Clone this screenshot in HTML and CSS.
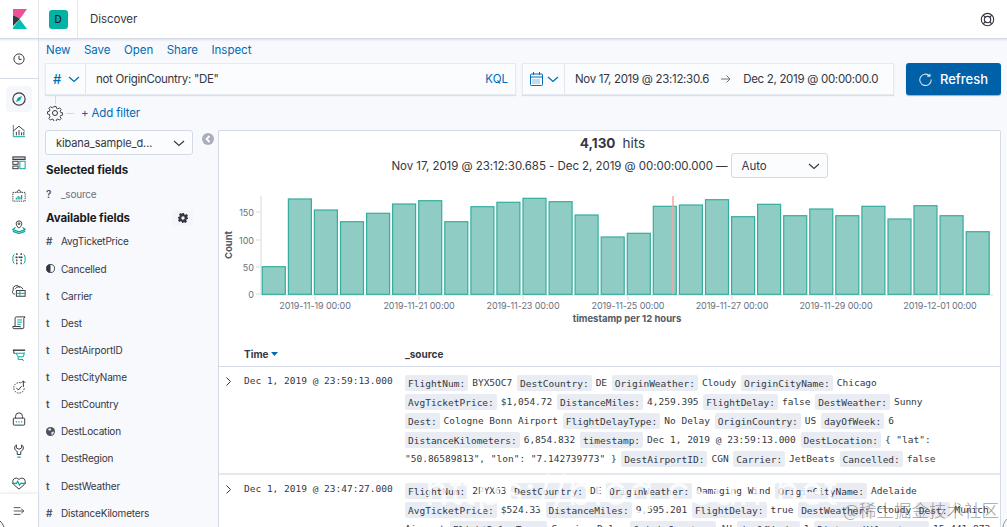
FILE: index.html
```html
<!DOCTYPE html>
<html lang="en">
<head>
<meta charset="utf-8">
<title>Discover - Kibana</title>
<link rel="stylesheet" href="styles.css">
</head>
<body>
<div class="app">
  <header class="topbar">
    <div class="logo-cell">
      <svg class="logo" width="16" height="20" viewBox="0 0 16 20"><path fill="#f04e98" d="M1 0h14L7.700 10.300C5.800 8 3.500 6.800 1 6.500z"/><path fill="#343741" d="M1 6.500C3.500 6.800 5.800 8 7.700 10.300L1 17z"/><path fill="#00bfb3" d="M7.700 10.300 15 20H1v-1.500z"/></svg>
    </div>
    <div class="space-cell"><span class="space-tile">D</span></div>
    <div class="page-title">Discover</div>
    <svg class="help" width="15" height="15" viewBox="0 0 16 16" fill="none" stroke="#343741" stroke-width="1.200"><circle cx="8" cy="8" r="6.600"/><circle cx="8" cy="8" r="3.400"/><path d="M3.400 3.400l2.200 2.200M12.600 3.400l-2.200 2.200M3.400 12.600l2.200-2.200M12.600 12.600l-2.200-2.200"/></svg>
  </header>
  <div class="below">
    <nav class="sidenav">
      <div class="nav-recent">
        <svg width="12" height="12" viewBox="0 0 16 16" fill="none" stroke="#343741" stroke-width="1.300"><circle cx="8" cy="8" r="6.800"/><path d="M8 3.800V8.500h3.400"/></svg>
      </div>
      <div class="nav-list">
        <div class="nav-item active"><svg viewBox="0 0 16 16" fill="none"><circle cx="8" cy="8" r="7" stroke="#343741" stroke-width="1.300"/><path fill="#00a69b" d="M11.500 4.500 9.300 9.300 4.500 11.500 6.700 6.700z"/></svg></div>
        <div class="nav-item"><svg viewBox="0 0 16 16" fill="none" stroke="#343741" stroke-width="1.100"><path stroke="#00a69b" d="M1.500 1v13.500H15"/><path d="M1.500 8 8 2.500 14.500 8M5 13V9M8 13V7M11 13V9.500M13.500 13V9"/></svg></div>
        <div class="nav-item"><svg viewBox="0 0 16 16" fill="none" stroke="#343741" stroke-width="1.100"><rect x="1" y="1" width="14" height="3" fill="#c4c8ce"/><rect x="1" y="6" width="6" height="3.500"/><rect x="1" y="11.500" width="6" height="3"/><rect x="9" y="6" width="6" height="8.500" stroke="#00a69b"/></svg></div>
        <div class="nav-item"><svg viewBox="0 0 16 16" fill="none" stroke="#343741" stroke-width="1.100"><path stroke-dasharray="1.500 1" d="M1 5h14v10H1z"/><path d="M5 5l3-3 3 3"/><path stroke="#00a69b" stroke-width="1.400" d="M5 13v-2M7 13V9M9 13v-3M11 13V8"/></svg></div>
        <div class="nav-item"><svg viewBox="0 0 16 16" fill="none" stroke="#343741" stroke-width="1.100"><path d="M8 9.500S4.800 6.800 4.800 4.200a3.200 3.200 0 0 1 6.400 0C11.200 6.800 8 9.500 8 9.500z"/><circle cx="8" cy="4.200" r="1"/><path stroke="#00a69b" stroke-width="1.300" d="M4 8.500 1 11l7 2.500 7-2.500-3-2.500M1 13l7 2.500L15 13"/></svg></div>
        <div class="nav-item"><svg viewBox="0 0 16 16" fill="none" stroke="#343741" stroke-width="1.100"><path stroke="#00a69b" d="M3 2.500C1.500 3.500 1 5 1 8s.5 4.500 2 5.500M13 2.500c1.500 1 2 2.500 2 5.500s-.5 4.500-2 5.500"/><path stroke-width="1.500" stroke-dasharray="2 1.500" d="M5.500 1.500v13M10.500 1.500v13M4 6h8"/></svg></div>
        <div class="nav-item"><svg viewBox="0 0 16 16" fill="none" stroke="#343741" stroke-width="1.100"><path d="M3.500 11.500H3A2.500 2.500 0 0 1 1.500 7 3.800 3.800 0 0 1 8.700 4.200"/><path d="M3.500 5.500c2-2.500 7-4 9 .5"/><rect x="5" y="7.500" width="10" height="6.500"/><path stroke="#00a69b" d="M5 10.700h10M9 7.500V14"/></svg></div>
        <div class="nav-item"><svg viewBox="0 0 16 16" fill="none" stroke="#343741" stroke-width="1.100"><path d="M3.500 12V2.500A1.500 1.500 0 0 1 5 1h10l-1.500 1.500V12a2 2 0 0 1-2 2.500H2.500A1.500 1.500 0 0 1 1 13v-1h8.500v1"/><path stroke="#00a69b" d="M6 4.500h5.500M6 7h5.500M6 9.500h4"/></svg></div>
        <div class="nav-item"><svg viewBox="0 0 16 16" fill="none" stroke="#343741" stroke-width="1.100"><path stroke-width="1.600" d="M1 2.500h14"/><path d="M2 2.500v3.500h2"/><path stroke="#00a69b" d="M4.500 6h9.500v-1M4.500 6 7 10h6l1-4M7 10v3h5.500"/><path d="M12 13l1 1.500"/></svg></div>
        <div class="nav-item"><svg viewBox="0 0 16 16" fill="none" stroke="#343741" stroke-width="1.100"><path stroke-dasharray="1.800 1.200" d="M10 3.300A6 6 0 1 0 14 9.500"/><path d="M5 9l2.300 2.500L11 7"/><path stroke="#343741" d="M13 8V1M10.800 3.300 13 1l2.200 2.300"/></svg></div>
        <div class="nav-item"><svg viewBox="0 0 16 16" fill="none" stroke="#343741" stroke-width="1.100"><rect x="1.500" y="7" width="13" height="8" rx="1"/><path d="M4 7V5a4 4 0 0 1 8 0v2"/><path stroke="#00a69b" stroke-width="1.400" d="M5 10.500v1.500M8 10.500v1.500M11 10.500v1.500"/></svg></div>
        <div class="nav-item"><svg viewBox="0 0 16 16" fill="none" stroke="#343741" stroke-width="1.100"><path d="M5 1C3.500 2 3 3 3 4.500c0 2 1.500 3.300 3 4V12h4V8.500c1.500-.7 3-2 3-4C13 3 12.500 2 11 1v3.500L8 6 5 4.500z"/><path stroke="#00a69b" stroke-width="1.300" d="M6 15h4"/></svg></div>
        <div class="nav-item"><svg viewBox="0 0 16 16" fill="none" stroke="#343741" stroke-width="1.100"><path d="M2.200 10C.5 8 .5 5 2 3.500S6.500 2 8 4c1.500-2 4.500-2 6 -.5s1.500 4.500-.2 6.500L8 15z"/><path stroke="#00a69b" stroke-width="1.300" d="M0 8.500h5l1.500-2.500 2 4.500 1.500-2h6"/></svg></div>
      </div>
      <div class="nav-collapse">
        <svg width="12" height="12" viewBox="0 0 16 16" fill="none" stroke="#343741" stroke-width="1.100"><path d="M1 3.500h9M1 8h13M1 12.500h9M11 5l3.500 3-3.500 3"/></svg>
      </div>
    </nav>
    <main class="main">
      <div class="menu">
        <a class="menu-link">New</a><a class="menu-link">Save</a><a class="menu-link">Open</a><a class="menu-link">Share</a><a class="menu-link">Inspect</a>
      </div>
      <div class="query-row">
        <div class="query">
          <div class="query-prefix"><span class="hash">#</span>
            <svg class="chev-blue" width="12" height="12" viewBox="0 0 12 12" fill="none" stroke="#006bb4" stroke-width="1.200"><path d="M1 4l5 4.500L11 4"/></svg></div>
          <div class="query-text">not OriginCountry: "DE"</div>
          <div class="kql">KQL</div>
        </div>
        <div class="dates">
          <div class="date-prefix">
            <svg width="13" height="14" viewBox="0 0 13 14" fill="none" stroke="#006bb4" stroke-width="1"><rect x=".5" y="2" width="12" height="11.500" rx="1"/><path d="M.5 5h12M3.500 0v3M9.500 0v3"/><path stroke-dasharray="1 1" stroke-width="5" d="M2.500 9.500h8" opacity=".45"/></svg>
            <svg width="12" height="12" viewBox="0 0 12 12" fill="none" stroke="#006bb4" stroke-width="1.200"><path d="M1 4l5 4.500L11 4"/></svg>
          </div>
          <div class="date-text"><span>Nov 17, 2019 @ 23:12:30.6</span>
            <svg class="arrow" width="10" height="10" viewBox="0 0 10 10" fill="none" stroke="#69707d" stroke-width="1"><path d="M0 5h9M5.500 1.500 9 5 5.500 8.500"/></svg>
            <span>Dec 2, 2019 @ 00:00:00.0</span></div>
        </div>
        <button class="refresh">
          <svg width="13" height="13" viewBox="0 0 16 16" fill="none" stroke="#fff" stroke-width="1.300" opacity=".85"><path d="M13 3.500A7 7 0 1 0 15 8M10 4h3.500V.8"/></svg>
          <span>Refresh</span></button>
      </div>
      <div class="filter-row">
        <i class="filter-stem"></i>
        <svg width="16" height="16" viewBox="0 0 16 16" fill="none" stroke="#343741" stroke-width="1"><path d="M6.800 1h2.400l.4 2 1.400.6 1.800-1.100 1.700 1.700-1.100 1.800.6 1.400 2 .4v2.400l-2 .4-.6 1.400 1.100 1.800-1.700 1.700-1.800-1.100-1.400.6-.4 2H6.800l-.4-2-1.400-.6-1.800 1.100-1.700-1.700 1.100-1.800L2 9.400 0 9V6.600l2-.4.6-1.400-1.100-1.800 1.700-1.700L5 2.400l1.400-.6z" transform="translate(.5 .5) scale(.94)"/><circle cx="8" cy="8" r="2.500"/></svg>
        <i class="filter-dash"></i>
        <a class="add-filter">+ Add filter</a>
      </div>
      <div class="content">
        <aside class="sidebar">
          <div class="index-select"><span>kibana_sample_d...</span>
            <svg width="12" height="12" viewBox="0 0 12 12" fill="none" stroke="#343741" stroke-width="1.100"><path d="M1 4l5 4.500L11 4"/></svg></div>
          <h3 class="side-title first">Selected fields</h3>
          <div class="field selected"><span class="ftype">?</span><span class="fname muted">_source</span></div>
          <div class="avail-head"><h3 class="side-title">Available fields</h3>
            <span class="gear-btn"><svg width="10" height="10" viewBox="0 0 10 10"><path fill="#343741" fill-rule="evenodd" d="M4 0h2l.3 1.400.9.400L8.500 1 10 2.500l-.8 1.300.4.900L10 5v1l-1.400.3-.4.900.8 1.300L7.500 10 6.200 9.200l-.9.400L5 10H4l-.3-1.400-.9-.4-1.300.8L0 7.500l.8-1.300-.4-.9L0 5V4l1.400-.3.400-.9L1 1.500 2.500 0l1.300.8.900-.4zM5 3.300a1.700 1.700 0 1 0 0 3.400 1.700 1.700 0 0 0 0-3.400z"/></svg></span></div>
          <div class="fields">
            <div class="field"><span class="ftype">#</span><span class="fname">AvgTicketPrice</span></div>
            <div class="field"><span class="ftype"><svg width="9" height="9" viewBox="0 0 10 10"><circle cx="5" cy="5" r="4.500" fill="none" stroke="#343741"/><path fill="#343741" d="M5 .5a4.500 4.500 0 0 0 0 9z"/></svg></span><span class="fname">Cancelled</span></div>
            <div class="field"><span class="ftype">t</span><span class="fname">Carrier</span></div>
            <div class="field"><span class="ftype">t</span><span class="fname">Dest</span></div>
            <div class="field"><span class="ftype">t</span><span class="fname">DestAirportID</span></div>
            <div class="field"><span class="ftype">t</span><span class="fname">DestCityName</span></div>
            <div class="field"><span class="ftype">t</span><span class="fname">DestCountry</span></div>
            <div class="field"><span class="ftype"><svg width="9" height="9" viewBox="0 0 10 10"><circle cx="5" cy="5" r="5" fill="#4b505a"/><path fill="#dfe3e8" d="M2 2.500 5 1l1 2-2 1.500zM6 5.500l3-.5-1 3-2 1z"/></svg></span><span class="fname">DestLocation</span></div>
            <div class="field"><span class="ftype">t</span><span class="fname">DestRegion</span></div>
            <div class="field"><span class="ftype">t</span><span class="fname">DestWeather</span></div>
            <div class="field"><span class="ftype">#</span><span class="fname">DistanceKilometers</span></div>
          </div>
        </aside>
        <div class="collapse-col"><svg width="12" height="12" viewBox="0 0 12 12"><circle cx="6" cy="6" r="6" fill="#a8afbb"/><path d="M7.500 3 4.500 6l3 3" fill="none" stroke="#fff" stroke-width="1.800"/></svg></div>
        <section class="panel">
          <div class="hits"><strong>4,130</strong><span>hits</span></div>
          <div class="range"><span>Nov 17, 2019 @ 23:12:30.685 - Dec 2, 2019 @ 00:00:00.000 —</span>
            <div class="interval"><span>Auto</span><svg width="12" height="12" viewBox="0 0 12 12" fill="none" stroke="#343741" stroke-width="1.100"><path d="M1 4l5 4.500L11 4"/></svg></div>
          </div>
          <svg class="chart" width="781" height="150" viewBox="0 0 781 150">
            <g class="axis-line"><path d="M42 11v99M42 110h732"/><path d="M37 27h5M37 55h5M37 82h5M37 109h5M96 110v5M200 110v5M304 110v5M409 110v5M513 110v5M617 110v5M721 110v5"/></g>
            <g class="bars">
              <rect x="43.300" y="81.700" width="23" height="27.600"/><rect x="69.400" y="14" width="23" height="95.300"/><rect x="95.400" y="25" width="23" height="84.300"/><rect x="121.500" y="36.700" width="23" height="72.600"/>
              <rect x="147.600" y="28.300" width="23" height="81"/><rect x="173.600" y="19" width="23" height="90.300"/><rect x="199.700" y="15.700" width="23" height="93.600"/><rect x="225.800" y="36.700" width="23" height="72.600"/>
              <rect x="251.900" y="21.700" width="23" height="87.600"/><rect x="277.900" y="17.300" width="23" height="92"/><rect x="304" y="13.300" width="23" height="96"/><rect x="330.100" y="16.700" width="23" height="92.600"/>
              <rect x="356.100" y="30" width="23" height="79.300"/><rect x="382.200" y="52" width="23" height="57.300"/><rect x="408.300" y="48.300" width="23" height="61"/><rect x="434.300" y="21.300" width="23" height="88"/>
              <rect x="460.400" y="20" width="23" height="89.300"/><rect x="486.500" y="14.700" width="23" height="94.600"/><rect x="512.600" y="31.700" width="23" height="77.600"/><rect x="538.600" y="19.300" width="23" height="90"/>
              <rect x="564.700" y="30.700" width="23" height="78.600"/><rect x="590.800" y="24" width="23" height="85.300"/><rect x="616.800" y="30.700" width="23" height="78.600"/><rect x="642.900" y="21.300" width="23" height="88"/>
              <rect x="669" y="34" width="23" height="75.300"/><rect x="695" y="20.700" width="23" height="88.600"/><rect x="721.100" y="30.700" width="23" height="78.600"/><rect x="747.200" y="46.700" width="23" height="62.600"/>
            </g>
            <path class="now-line" d="M454 11v98"/>
            <g class="ylabels"><text x="35" y="30.500">150</text><text x="35" y="58.500">100</text><text x="35" y="85.500">50</text><text x="35" y="113">0</text></g>
            <g class="xlabels"><text x="96" y="124">2019-11-19 00:00</text><text x="200" y="124">2019-11-21 00:00</text><text x="304" y="124">2019-11-23 00:00</text><text x="409" y="124">2019-11-25 00:00</text><text x="513" y="124">2019-11-27 00:00</text><text x="617" y="124">2019-11-29 00:00</text><text x="721" y="124">2019-12-01 00:00</text></g>
            <text class="axis-title" x="408" y="137">timestamp per 12 hours</text>
            <text class="axis-title" transform="translate(12.500 60) rotate(-90)">Count</text>
          </svg>
          <div class="thead"><span></span><span class="th">Time <svg width="7" height="4" viewBox="0 0 7 4"><path fill="#006bb4" d="M0 0h7L3.500 4z"/></svg></span><span class="th">_source</span></div>
          <div class="row">
            <svg class="row-chev" width="7" height="9" viewBox="0 0 7 9" fill="none" stroke="#343741" stroke-width="1"><path d="M1.500 .5l4 4-4 4"/></svg>
            <div class="time">Dec 1, 2019 @ 23:59:13.000</div>
            <div class="source"><span class="k">FlightNum:</span><span class="v">BYX5OC7</span> <span class="k">DestCountry:</span><span class="v">DE</span> <span class="k">OriginWeather:</span><span class="v">Cloudy</span> <span class="k">OriginCityName:</span><span class="v">Chicago</span> <span class="k">AvgTicketPrice:</span><span class="v">$1,054.72</span> <span class="k">DistanceMiles:</span><span class="v">4,259.395</span> <span class="k">FlightDelay:</span><span class="v">false</span> <span class="k">DestWeather:</span><span class="v">Sunny</span> <span class="k">Dest:</span><span class="v">Cologne Bonn Airport</span> <span class="k">FlightDelayType:</span><span class="v">No Delay</span> <span class="k">OriginCountry:</span><span class="v">US</span> <span class="k">dayOfWeek:</span><span class="v">6</span> <span class="k">DistanceKilometers:</span><span class="v">6,854.832</span> <span class="k">timestamp:</span><span class="v">Dec 1, 2019 @ 23:59:13.000</span> <span class="k">DestLocation:</span><span class="v">{ "lat": "50.86589813", "lon": "7.142739773" }</span> <span class="k">DestAirportID:</span><span class="v">CGN</span> <span class="k">Carrier:</span><span class="v">JetBeats</span> <span class="k">Cancelled:</span><span class="v">false</span></div>
          </div>
          <div class="row">
            <svg class="row-chev" width="7" height="9" viewBox="0 0 7 9" fill="none" stroke="#343741" stroke-width="1"><path d="M1.500 .5l4 4-4 4"/></svg>
            <div class="time">Dec 1, 2019 @ 23:47:27.000</div>
            <div class="source"><span class="k">FlightNum:</span><span class="v">2PYX63</span> <span class="k">DestCountry:</span><span class="v">DE</span> <span class="k">OriginWeather:</span><span class="v">Damaging Wind</span> <span class="k">OriginCityName:</span><span class="v">Adelaide</span> <span class="k">AvgTicketPrice:</span><span class="v">$524.33</span> <span class="k">DistanceMiles:</span><span class="v">9,595.201</span> <span class="k">FlightDelay:</span><span class="v">true</span> <span class="k">DestWeather:</span><span class="v">Cloudy</span> <span class="k">Dest:</span><span class="v">Munich Airport</span> <span class="k">FlightDelayType:</span><span class="v">Carrier Delay</span> <span class="k">OriginCountry:</span><span class="v">AU</span> <span class="k">dayOfWeek:</span><span class="v">1</span> <span class="k">DistanceKilometers:</span><span class="v">15,441.873</span></div>
          </div>
        </section>
      </div>
    </main>
  </div>
  <div class="wm-url">https://blog.csdn.net</div>
  <div class="wm-cn">@稀土掘金技术社区</div>
  <svg class="corner-left" width="6" height="6" viewBox="0 0 6 6" fill="none" stroke="#4b505a" stroke-width="1"><path d="M0 0c1.500 1.500 3 3.500 4 6"/></svg>
  <svg class="corner-right" width="5" height="8" viewBox="0 0 5 8" fill="none" stroke="#8a8f99" stroke-width="1"><path d="M5 0C3 2 1.500 4.500 1 8"/></svg>
</div>
</body>
</html>
```
FILE: styles.css
```css
* { box-sizing: border-box; }
html, body { margin: 0; height: 100%; overflow: hidden; }
body { font-family: Inter, "Liberation Sans", sans-serif; color: #343741; background: #f8f9fd; }
h3 { margin: 0; }
.app { position: relative; width: 1007px; height: 527px; overflow: hidden; display: flex; flex-direction: column; }

.topbar { height: 39px; flex: none; background: #fff; border-bottom: 1px solid #d3dae6; box-shadow: 0 1px 2px rgba(152,162,179,.3); display: flex; align-items: center; position: relative; z-index: 2; }
.logo-cell { width: 39px; height: 100%; display: flex; align-items: center; padding-left: 12px; border-right: 1px solid #e3e7ee; }
.logo { display: block; margin-top: -1px; }
.space-cell { width: 39px; height: 100%; display: flex; align-items: center; justify-content: center; border-right: 1px solid #e3e7ee; }
.space-tile { width: 19px; height: 19px; border-radius: 3px; background: #00b3a4; color: #1a1c21; font-size: 10px; font-weight: 500; display: flex; align-items: center; justify-content: center; }
.page-title { margin-left: 12px; font-size: 11.500px; letter-spacing: -.05px; color: #343741; flex: 1; }
.help { margin-right: 12px; }

.below { flex: 1; display: flex; min-height: 0; }
.sidenav { width: 39px; flex: none; background: #fff; border-right: 1px solid #dfe3ea; display: flex; flex-direction: column; }
.nav-recent { height: 40px; flex: none; border-bottom: 1px solid #d3dae6; display: flex; align-items: center; justify-content: center; }
.nav-list { flex: 1; padding-top: 4px; display: flex; flex-direction: column; align-items: center; }
.nav-item { width: 26px; height: 32px; flex: none; display: flex; align-items: center; justify-content: center; }
.nav-item svg { width: 14px; height: 14px; }
.nav-item.active { height: 26px; margin: 3px 0; background: #f5f7fa; border-radius: 4px; }
.nav-collapse { position: absolute; left: 0; bottom: 0; width: 38px; height: 33px; background: #fff; box-shadow: 0 -1px 3px rgba(152,162,179,.25); display: flex; align-items: center; justify-content: center; }

.main { flex: 1; min-width: 0; padding: 0 6px; display: flex; flex-direction: column; }
.menu { height: 24px; flex: none; padding: 0 0 2px 1px; display: flex; gap: 13.500px; align-items: center; }
.menu-link { font-size: 11.500px; letter-spacing: -.03px; color: #006bb4; }
.query-row { height: 32px; flex: none; display: flex; }
.query { width: 471px; margin-right: 6px; background: #fbfcfe; border: 1px solid #e6eaf1; box-shadow: 0 1px 1px rgba(152,162,179,.3); display: flex; align-items: center; }
.query-prefix { width: 40px; height: 100%; border-right: 1px solid #e3e7ee; display: flex; align-items: center; padding-left: 7px; gap: 7px; }
.hash { color: #006bb4; font-size: 13px; font-weight: 500; }
.query-text { flex: 1; padding-left: 10px; font-size: 11.500px; letter-spacing: -.3px; color: #343741; }
.kql { font-size: 11.500px; color: #006bb4; padding-right: 7px; }
.dates { width: 372px; margin-right: 12px; background: #fbfcfe; border: 1px solid #e6eaf1; box-shadow: 0 1px 1px rgba(152,162,179,.3); display: flex; align-items: center; }
.date-prefix { width: 42px; height: 100%; border-right: 1px solid #e3e7ee; display: flex; align-items: center; padding-left: 7px; gap: 4px; }
.date-text { flex: 1; padding-left: 10px; font-size: 11.500px; letter-spacing: -.3px; color: #343741; white-space: nowrap; display: flex; align-items: center; gap: 12px; }
.refresh { width: 95px; border: 0; border-radius: 3px; background: #0060a8; color: #fff; font: 500 13px Inter, "Liberation Sans", sans-serif; display: flex; align-items: center; justify-content: center; gap: 8px; padding: 0; box-shadow: 0 1px 1px rgba(0,60,110,.4); }

.filter-row { height: 35px; flex: none; position: relative; display: flex; align-items: center; padding: 1px 0 0 2px; }
.filter-stem { position: absolute; left: 10px; top: 0; width: 1px; height: 9px; background: #d3dae6; }
.filter-dash { width: 8px; height: 1px; background: #d3dae6; margin: 0 7px 0 3px; }
.add-filter { font-size: 11.500px; letter-spacing: -.15px; color: #006bb4; }

.content { flex: 1; min-height: 0; display: flex; }
.sidebar { width: 148px; flex: none; }
.index-select { height: 25px; background: #fbfcfe; border: 1px solid #d3dae6; border-radius: 3px; display: flex; align-items: center; justify-content: space-between; padding: 0 7px 0 10px; font-size: 11px; letter-spacing: -.1px; }
.side-title { font-size: 11.500px; letter-spacing: -.1px; font-weight: 700; color: #1a1c21; line-height: 16px; padding-left: 1px; }
.side-title.first { margin-top: 7px; }
.field { height: 27.150px; display: flex; align-items: center; font-size: 10px; letter-spacing: -.2px; color: #343741; }
.field.selected { height: 24px; margin-top: 4px; }
.ftype { width: 16px; font-weight: 600; color: #4b505a; display: flex; align-items: center; padding-left: 1px; }
.fname.muted { color: #69707d; }
.avail-head { height: 17px; display: flex; align-items: center; justify-content: space-between; margin-top: 3px; }
.gear-btn { width: 21px; height: 16px; background: #f3f5f9; border-radius: 3px; display: flex; align-items: center; justify-content: center; }
.fields { padding-top: 1.800px; }
.collapse-col { width: 25px; flex: none; display: flex; justify-content: center; padding: 3px 0 0 5px; }

.panel { flex: 1; min-width: 0; height: 500px; background: #fff; border: 1px solid #d3dae6; border-radius: 2px; }
.hits { height: 22px; display: flex; align-items: center; justify-content: center; gap: 7px; font-size: 13.500px; color: #343741; padding: 2px 0 0 6px; }
.hits strong { font-weight: 700; }
.range { height: 25px; display: flex; align-items: center; justify-content: center; gap: 3px; font-size: 11.500px; letter-spacing: -.05px; }
.interval { width: 97px; height: 25px; border: 1px solid #d3dae6; border-radius: 3px; background: #fbfcfe; display: flex; align-items: center; justify-content: space-between; padding: 0 7px 0 10px; font-size: 11.500px; }
.chart { display: block; margin-top: 7px; }
.axis-line { stroke: #e6e6e6; fill: none; stroke-width: 1.500; }
.bars rect { fill: #8fcdc4; stroke: #35ad9e; stroke-width: 1.200; }
.now-line { stroke: #f7a3a3; stroke-width: 1.500; fill: none; }
.ylabels text { font-size: 9px; fill: #69707d; text-anchor: end; }
.xlabels text { font-size: 9px; letter-spacing: -.1px; fill: #69707d; text-anchor: middle; }
.axis-title { font-size: 9.500px; font-weight: 700; fill: #535966; text-anchor: middle; }
.thead { height: 32px; display: grid; grid-template-columns: 25px 161px 1fr; align-items: end; padding-bottom: 6px; border-bottom: 1px solid #d3dae6; }
.th { font-size: 10px; font-weight: 700; color: #343741; display: flex; align-items: center; gap: 3px; }
.row { display: grid; grid-template-columns: 25px 161px 1fr; border-bottom: 2px solid #e4e8ef; padding: 6px 0 5px; }
.row-chev { margin: 4px 0 0 6px; }
.time { margin-top: 1px; font: 9.500px/13px "DejaVu Sans Mono", "Liberation Mono", monospace; color: #343741; }
.source { font: 9.500px/19px "DejaVu Sans Mono", "Liberation Mono", monospace; word-spacing: -1px; color: #343741; }
.v { word-spacing: 0; }
.k { background: #e9edf3; border-radius: 2px; padding: 2.500px 3px; margin-right: 4px; color: #343741; }

.wm-url { position: absolute; left: 425px; top: 466px; font-size: 40px; letter-spacing: 1px; color: rgba(255,255,255,.8); white-space: nowrap; }
.wm-cn { position: absolute; left: 843px; top: 497px; font: 300 17.500px "Noto Sans CJK SC", sans-serif; color: rgba(90,90,90,.6); white-space: nowrap; }
.corner-left { position: absolute; left: 0; bottom: 0; }
.corner-right { position: absolute; right: 0; bottom: 0; }
```
